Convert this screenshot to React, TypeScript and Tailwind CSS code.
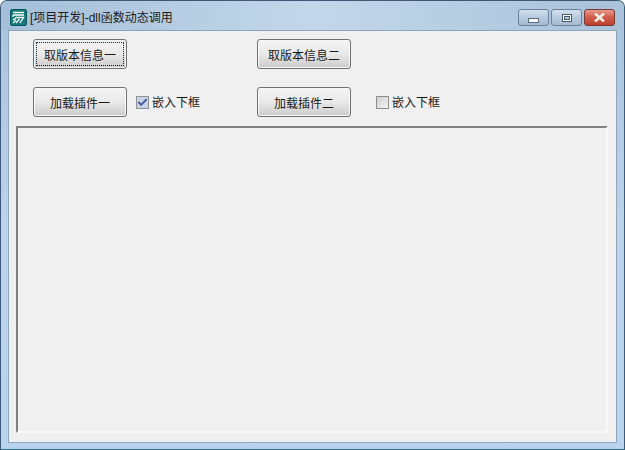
import { Check } from "lucide-react";

const font = "font-['Liberation_Sans','Noto_Sans_CJK_SC',sans-serif]";

function WinButton({ label, focused }: { label: string; focused?: boolean }) {
    return (
        <button
            className={`w-[94px] h-[30px] shrink-0 rounded-[3px] border border-[#707070] bg-gradient-to-b from-[#f4f4f4] via-[#e9e9e9] to-[#cbcbcb] p-[2px] text-[12px] leading-none text-[#1a1a1a] ${
                focused ? "shadow-[inset_0_0_0_1px_#e8f4fb]" : "shadow-[inset_0_0_0_1px_#f8f8f8]"
            }`}
        >
            <span
                className={`flex h-full w-full items-center justify-center border border-dotted pt-[3px] ${
                    focused ? "border-[#222222]" : "border-transparent"
                }`}
            >
                {label}
            </span>
        </button>
    );
}

function CheckBox({ label, checked }: { label: string; checked?: boolean }) {
    return (
        <div className="flex items-center gap-[3px] text-[12px] leading-none text-[#1a1a1a]">
            <span
                className={`flex h-[13px] w-[13px] items-center justify-center border border-[#8e8f8f] ${
                    checked ? "bg-[#c9d3e8]" : "bg-gradient-to-br from-[#cfcfcf] to-[#f4f4f4]"
                }`}
            >
                {checked && <Check className="h-[11px] w-[11px] text-[#3f5a96]" strokeWidth={4} />}
            </span>
            <span className="pt-[2px]">{label}</span>
        </div>
    );
}

function CaptionButton({ kind }: { kind: "min" | "max" | "close" }) {
    const look =
        kind === "close"
            ? "border-[#7a3a34] bg-gradient-to-b from-[#e59a8c] via-[#cf5b4a] to-[#c0402f]"
            : "border-[#68809c] bg-gradient-to-b from-[#d3e0ed] via-[#b7cbdf] to-[#a3bbd3]";
    return (
        <div className={`flex h-[17px] w-[31px] items-center justify-center rounded-[3px] border ${look}`}>
            {kind === "min" && <span className="mt-[6px] h-[5px] w-[11px] border border-[#5b6b80] bg-white" />}
            {kind === "max" && (
                <span className="flex h-[8px] w-[10px] items-center justify-center border border-[#46566b] bg-white">
                    <span className="h-[4px] w-[6px] border border-[#46566b] bg-[#b7cbdf]" />
                </span>
            )}
            {kind === "close" && (
                <svg width="13" height="9" viewBox="0 0 13 9">
                    <path d="M2 0.5 L11 8.5 M11 0.5 L2 8.5" stroke="#f7efe6" strokeWidth="2.6" />
                </svg>
            )}
        </div>
    );
}

function AppIcon() {
    return (
        <svg width="17" height="17" viewBox="0 0 17 17" className="shrink-0">
            <rect x="0.5" y="0.5" width="16" height="16" rx="1.5" fill="#13777c" stroke="#0c5a60" />
            <path d="M3 3.5 H14 M3 6 H14 M3 6 V8" stroke="#ffffff" strokeWidth="1.3" fill="none" />
            <path d="M3 11 L6.5 8.5 H13.5 L10 14 M6 14 L9.5 10 M3 14 L6 11" stroke="#ffffff" strokeWidth="1.3" fill="none" />
        </svg>
    );
}

export default function App() {
    return (
        <div
            className={`${font} flex h-[450px] w-[625px] flex-col overflow-hidden rounded-t-[7px] border border-[#3c5a78] border-b-[#2f6f80] bg-gradient-to-b from-[#a9c3dc] via-[#bcd3ea] to-[#b9d3ee]`}
        >
            {/* Title bar */}
            <div className="flex h-[29px] shrink-0 items-center bg-gradient-to-r from-[#a4bfd9] via-[#c3d7ea] to-[#a9c2da] pl-[9px] pr-[9px] pt-[4px]">
                <AppIcon />
                <span className="ml-[3px] pt-[1px] text-[12px] leading-none text-[#1c1c1c]">[项目开发]-dll函数动态调用</span>
                <div className="ml-auto flex gap-[2px]">
                    <CaptionButton kind="min" />
                    <CaptionButton kind="max" />
                    <CaptionButton kind="close" />
                </div>
            </div>

            {/* Client area */}
            <div className="mx-[7px] mb-[6px] flex min-h-0 flex-1 flex-col border border-[#8da5bd] bg-[#f0f0f0]">
                <div className="flex pl-[24px] pt-[8px]">
                    <WinButton label="取版本信息一" focused />
                    <div className="ml-[130px]">
                        <WinButton label="取版本信息二" />
                    </div>
                </div>
                <div className="mt-[18px] flex items-center pl-[24px]">
                    <WinButton label="加载插件一" />
                    <div className="ml-[9px] w-[121px]">
                        <CheckBox label="嵌入下框" checked />
                    </div>
                    <WinButton label="加载插件二" />
                    <div className="ml-[25px]">
                        <CheckBox label="嵌入下框" />
                    </div>
                </div>
                <div className="mb-[9px] ml-[7px] mr-[8px] mt-[9px] flex-1 border-2 border-[#f8f8f8] border-l-[#7f7f7f] border-t-[#7f7f7f] bg-[#f0f0f0]" />
            </div>
        </div>
    );
}
